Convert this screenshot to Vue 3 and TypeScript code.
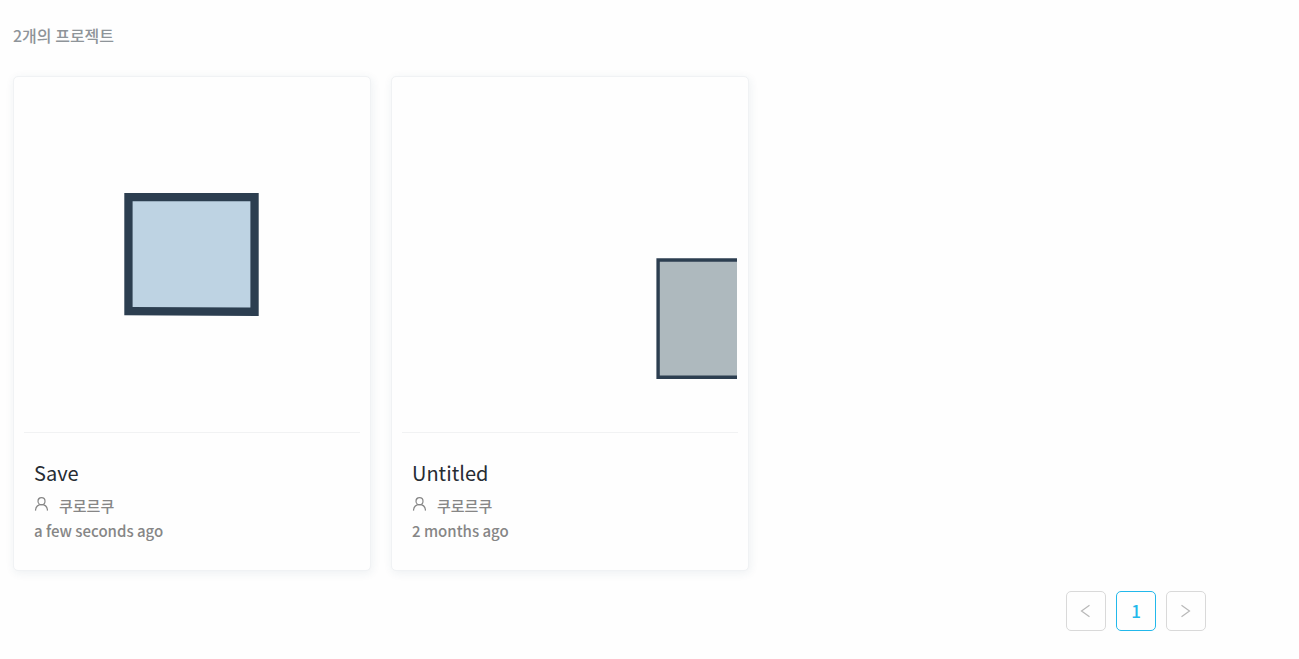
<script setup lang="ts">
interface Project {
  id: number
  title: string
  author: string
  updated: string
  art: 'blue' | 'gray'
}

const projects: Project[] = [
  { id: 1, title: 'Save', author: '쿠로르쿠', updated: 'a few seconds ago', art: 'blue' },
  { id: 2, title: 'Untitled', author: '쿠로르쿠', updated: '2 months ago', art: 'gray' },
]
</script>

<template>
  <main class="page">
    <h1 class="count">{{ projects.length }}개의 프로젝트</h1>

    <section class="grid">
      <article v-for="project in projects" :key="project.id" class="card">
        <div class="preview">
          <svg v-if="project.art === 'blue'" viewBox="0 0 336 345" class="art" aria-hidden="true">
            <path d="M100.3 106H234.7V229L100.3 228.2Z" fill="#2c3e50" />
            <path d="M108.6 114.3H226.4V220.6L108.6 220Z" fill="#bed3e3" />
          </svg>
          <svg v-else viewBox="0 0 336 345" class="art" aria-hidden="true">
            <path d="M254.4 171.2H335V292H254.4Z" fill="#2c3e50" />
            <path d="M257.8 174.7H335V288.6H257.8Z" fill="#aeb9be" />
          </svg>
        </div>
        <div class="info">
          <h2 class="title">{{ project.title }}</h2>
          <p class="author">
            <svg class="user" viewBox="0 0 14 14" aria-hidden="true">
              <circle cx="7.5" cy="4.2" r="3.5" />
              <path d="M1.5 13.6C1.7 10 4.2 7.7 7.5 7.7S13.3 10 13.5 13.6" />
            </svg>
            <span>{{ project.author }}</span>
          </p>
          <p class="updated">{{ project.updated }}</p>
        </div>
      </article>
    </section>

    <nav class="pagination" aria-label="Pagination">
      <button type="button" class="page-button" disabled aria-label="Previous page">
        <svg viewBox="0 0 12 14" aria-hidden="true"><path d="M9.5 1.2L1.5 7L9.5 12.8" /></svg>
      </button>
      <button type="button" class="page-button active" aria-current="page">1</button>
      <button type="button" class="page-button" disabled aria-label="Next page">
        <svg viewBox="0 0 12 14" aria-hidden="true"><path d="M1.5 1.2L9.5 7L1.5 12.8" /></svg>
      </button>
    </nav>
  </main>
</template>

<style>
body {
  background: #fefefe;
}
</style>

<style scoped>
.page {
  padding: 23px 93px 24px 13px;
  font-family: "Noto Sans CJK KR", "Noto Sans", sans-serif;
  color: #868686;
}

.count {
  margin: 0 0 29px;
  font-size: 16px;
  font-weight: 500;
  line-height: 24px;
  color: #8e9499;
}

.grid {
  display: grid;
  grid-template-columns: repeat(auto-fill, 358px);
  gap: 20px;
}

.card {
  box-sizing: border-box;
  border: 1px solid #f0f2f4;
  border-radius: 5px;
  padding: 10px;
  background: #fefefe;
  box-shadow: 1px 2px 10px rgba(44, 72, 100, 0.08);
}

.preview {
  border-bottom: 1px solid #f1f2f3;
}

.art {
  display: block;
  width: 100%;
}

.info {
  padding: 24px 10px 16px;
}

.title {
  margin: 0;
  font-size: 20px;
  font-weight: 400;
  line-height: 32px;
  color: #262c33;
}

.author,
.updated {
  margin: 0;
  font-size: 15px;
  font-weight: 500;
}

.author {
  display: flex;
  align-items: center;
  gap: 11px;
  padding-top: 5px;
  line-height: 24px;
}

.user {
  width: 14px;
  height: 14px;
  margin-bottom: 4px;
  fill: none;
  stroke: #868686;
  stroke-width: 1.2;
}

.updated {
  line-height: 26px;
}

.pagination {
  display: flex;
  justify-content: flex-end;
  gap: 10px;
  margin-top: 20px;
}

.page-button {
  display: flex;
  align-items: center;
  justify-content: center;
  width: 40px;
  height: 40px;
  padding: 0 0 1px;
  border: 1px solid #d9d9d9;
  border-radius: 5px;
  background: #fefefe;
  font-family: inherit;
  font-size: 17px;
  font-weight: 500;
  color: #22b8eb;
}

.page-button.active {
  border-color: #22b8eb;
}

.page-button svg {
  width: 12px;
  height: 14px;
  fill: none;
  stroke: #b8b8b8;
  stroke-width: 1.2;
}
</style>
